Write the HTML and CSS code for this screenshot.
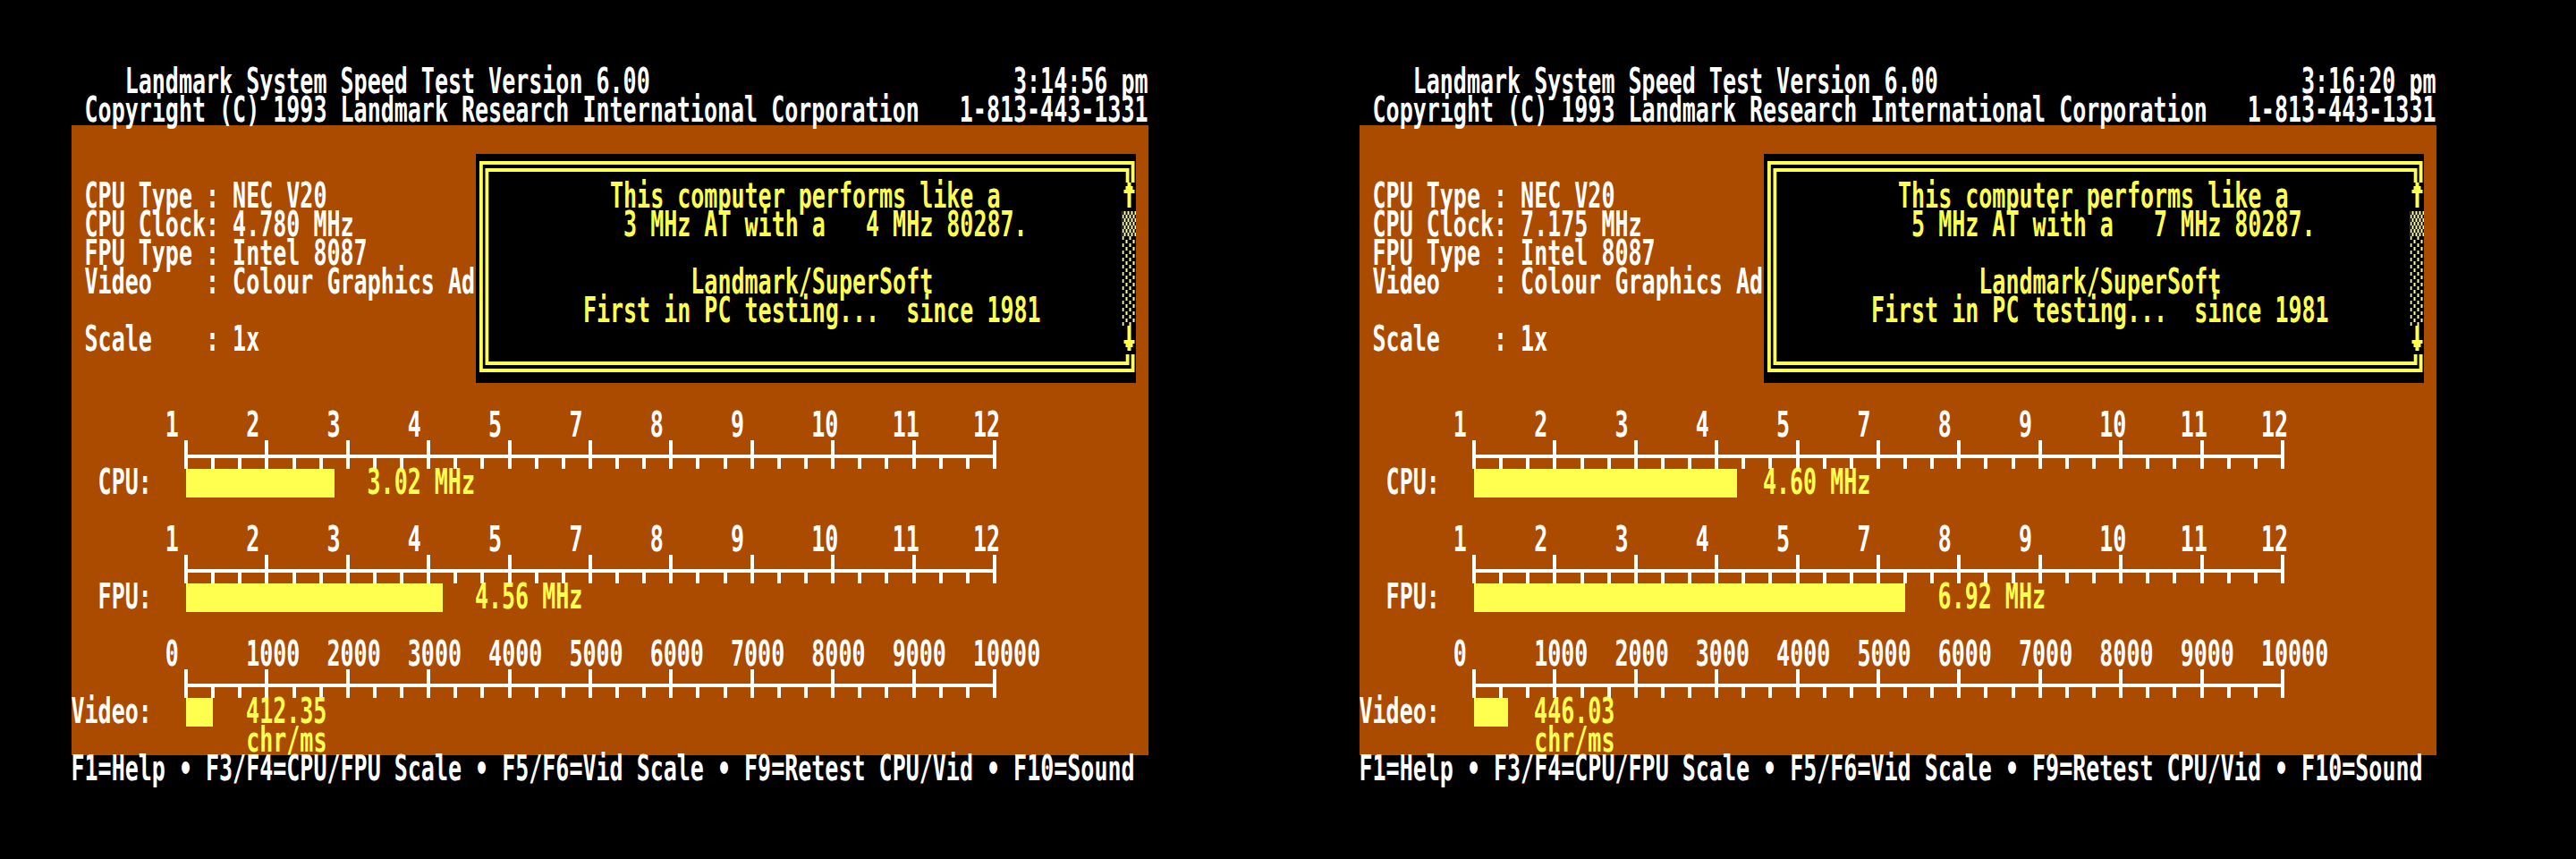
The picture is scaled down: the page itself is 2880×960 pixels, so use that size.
FILE: index.html
```
<!DOCTYPE html>
<html lang="en">
<head>
<meta charset="utf-8">
<title>Landmark System Speed Test</title>
<link rel="stylesheet" href="styles.css">
</head>
<body>
<svg class="defs" width="0" height="0" aria-hidden="true">
  <defs>
    <pattern id="shade-dense" width="4" height="8" patternUnits="userSpaceOnUse">
      <path d="M0 4h2v4h-2zM2 0h2v4h-2z"/>
    </pattern>
    <pattern id="shade-light" width="8" height="8" patternUnits="userSpaceOnUse">
      <path d="M0 4h2v4h-2zM4 0h2v4h-2z"/>
    </pattern>
  </defs>
</svg>
<main class="pair" id="pair"></main>
<script src="screens.js"></script>
</body>
</html>
```

FILE: screens.js
```
const COL = 15.05;
const PX = COL / 8;

const runs = [
  { time: "3:14:56 pm", clock: "4.780", at: 3, fpuAt: 4,
    cpu: [88.4, 22, "3.02 MHz"], fpu: [152.4, 30, "4.56 MHz"], video: [16, 13, "412.35"] },
  { time: "3:16:20 pm", clock: "7.175", at: 5, fpuAt: 7,
    cpu: [156.4, 30, "4.60 MHz"], fpu: [256.4, 43, "6.92 MHz"], video: [20, 13, "446.03"] }
];

const line = (text = "", cls = "") =>
  `<div class="line ${cls}"><span class="glyphs">${text}</span></div>`;

const mhz = ["1", "2", "3", "4", "5", "7", "8", "9", "10", "11", "12"];
const chr = ["0", "1000", "2000", "3000", "4000", "5000", "6000", "7000", "8000", "9000", "10000"];

function ruler() {
  const start = 126, step = 30.13, w = 4;
  let d = `M${start} 16h${30 * step + w}v4H${start}z`;
  for (let i = 0; i <= 30; i++) {
    const x = Math.round(start + i * step);
    d += `M${x} ${i % 3 ? 20 : 0}h${w}V32h${-w}z`;
  }
  return `<svg class="ruler" width="1204" height="32" aria-hidden="true"><path d="${d}"/></svg>`;
}

function gauge(label, ticks, [units, col, value]) {
  const [w, gap] = [units * PX, col * COL - (68 + units) * PX];
  return `<section class="gauge">
    ${line(" ".repeat(7) + ticks.map(t => t.padEnd(6)).join(""))}
    ${ruler()}
    <div class="reading">
      <div class="label">${line(label)}</div>
      <div class="bar" style="width:${w}px"></div>
      <div class="value" style="margin-left:${gap}px">${line(value)}</div>
    </div>
  </section>`;
}

const frame = `<svg class="frame" width="738" height="256" aria-hidden="true">
  <path d="M4 8H736.5V32H732.7V12H7.8V240H732.7V224H736.5V244H4z"/>
  <path d="M10.5 16H730.5V32H726.7V20H14.3V232H726.7V224H730.5V236H10.5z"/>
  <path d="M728.5 32h4v4h2v4h2v4h-4v16h-4v-16h-4v-4h2v-4h2z"/>
  <path d="M728.5 192h4v16h4v4h-2v4h-2v4h-4v-4h-2v-4h-2v-4h4z"/>
  <g transform="translate(722.5 64)">
    <rect width="16" height="28" fill="url(#shade-dense)"/>
    <rect y="28" width="16" height="100" fill="url(#shade-light)"/>
  </g>
</svg>`;

const screen = r => `<article class="screen">
  <header class="title">
    <div class="split">${line("    Landmark System Speed Test Version 6.00")}${line(r.time)}</div>
    <div class="split">${line(" Copyright (C) 1993 Landmark Research International Corporation")}${line("1-813-443-1331")}</div>
  </header>
  <div class="panel">
    <div class="info">
      <div class="system">
        ${line(" CPU Type : NEC V20")}
        ${line(" CPU Clock: " + r.clock + " MHz")}
        ${line(" FPU Type : Intel 8087")}
        ${line(" Video    : Colour Graphics Ad")}
        ${line()}
        ${line(" Scale    : 1x")}
      </div>
      <div class="dialog">
        ${frame}
        ${line(" ".repeat(10) + "This computer performs like a")}
        ${line(" ".repeat(11) + r.at + " MHz AT with a   " + r.fpuAt + " MHz 80287.")}
        ${line()}
        ${line(" ".repeat(16) + "Landmark/SuperSoft")}
        ${line(" ".repeat(8) + "First in PC testing...  since 1981")}
      </div>
    </div>
    <div class="gauges">
      ${gauge("  CPU:", mhz, r.cpu)}
      ${gauge("  FPU:", mhz, r.fpu)}
      ${gauge("Video:", chr, r.video)}
    </div>
    <div class="unit">${line(" ".repeat(13) + "chr/ms")}</div>
  </div>
  <footer>${line("F1=Help • F3/F4=CPU/FPU Scale • F5/F6=Vid Scale • F9=Retest CPU/Vid • F10=Sound")}</footer>
</article>`;

document.getElementById("pair").innerHTML = runs.map(screen).join("");
```

FILE: styles.css
```
body {
  margin: 0;
  background: #000;
  color: #fff;
  font: bold 25px "DejaVu Sans Mono", monospace;
}

.defs { display: block; }
.defs path { fill: #ffff8c; }

.pair {
  display: grid;
  grid-template-columns: 1440px 1440px;
  height: 960px;
  overflow: hidden;
}

.screen {
  width: 1204px;
  padding: 76px 0 0 80px;
}

.line { height: 32px; }

.glyphs {
  display: block;
  width: max-content;
  line-height: 19px;
  white-space: pre;
  transform: translate(-0.5px, 0.5px) scaleY(1.54);
  transform-origin: 0 0;
}

.split {
  display: flex;
  justify-content: space-between;
}

.panel {
  height: 704px;
  background: #aa4b00;
}

.info {
  display: flex;
  height: 288px;
  padding-top: 32px;
}

.system {
  width: 452px;
  padding-top: 32px;
}

.dialog {
  position: relative;
  box-sizing: border-box;
  width: 738px;
  height: 256px;
  padding-top: 32px;
  background: #000;
  color: #ffff4f;
}

.frame {
  position: absolute;
  inset: 0;
  fill: #ffff4f;
}

.gauges {
  display: grid;
  gap: 32px;
}

.ruler {
  display: block;
  fill: #fff;
}

.reading {
  display: flex;
  height: 32px;
}

.label { width: 127.9px; }

.bar { background: #ffff4f; }

.value,
.unit { color: #ffff4f; }
```
